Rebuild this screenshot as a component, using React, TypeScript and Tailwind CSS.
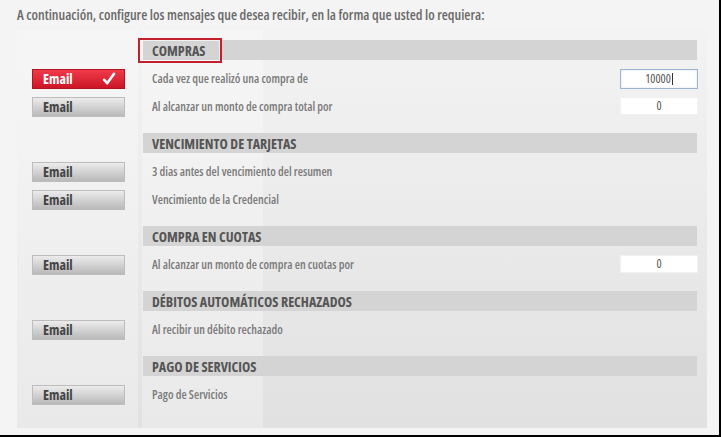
type Row = {
  label: string;
  active?: boolean;
  input?: { value: string; focused?: boolean };
};

type Section = {
  title: string;
  highlight?: boolean;
  rows: Row[];
};

const sections: Section[] = [
  {
    title: "COMPRAS",
    highlight: true,
    rows: [
      { label: "Cada vez que realizó una compra de", active: true, input: { value: "10000", focused: true } },
      { label: "Al alcanzar un monto de compra total por", input: { value: "0" } },
    ],
  },
  {
    title: "VENCIMIENTO DE TARJETAS",
    rows: [
      { label: "3 dias antes del vencimiento del resumen" },
      { label: "Vencimiento de la Credencial" },
    ],
  },
  {
    title: "COMPRA EN CUOTAS",
    rows: [{ label: "Al alcanzar un monto de compra en cuotas por", input: { value: "0" } }],
  },
  {
    title: "DÉBITOS AUTOMÁTICOS RECHAZADOS",
    rows: [{ label: "Al recibir un débito rechazado" }],
  },
  {
    title: "PAGO DE SERVICIOS",
    rows: [{ label: "Pago de Servicios" }],
  },
];

function Check() {
  return (
    <svg viewBox="0 0 14 14" className="h-[14px] w-[14px]">
      <path
        d="M2.2 7.8 L5.2 11.2 L12 1.8"
        fill="none"
        stroke="#fff"
        strokeWidth="2.6"
        strokeLinecap="round"
        strokeLinejoin="round"
      />
    </svg>
  );
}

function EmailButton({ active }: { active?: boolean }) {
  if (active) {
    return (
      <button
        type="button"
        className="flex h-[20px] w-[93px] items-center justify-between border border-[#b3121f] bg-gradient-to-b from-[#f0394a] to-[#cc1426] pl-[10px] pr-[8px] text-[14px] font-bold leading-none text-white"
      >
        Email
        <Check />
      </button>
    );
  }
  return (
    <button
      type="button"
      className="flex h-[20px] w-[93px] items-center border border-[#bdbdbd] bg-gradient-to-b from-[#ececec] to-[#b9b9b9] pl-[10px] text-[14px] font-bold leading-none text-[#444]"
    >
      Email
    </button>
  );
}

function ValueInput({ value, focused }: { value: string; focused?: boolean }) {
  return (
    <div
      className={
        focused
          ? "flex h-[20px] w-[78px] items-center justify-center border border-[#9db3d4] bg-white text-[12px] text-[#555] shadow-[inset_0_0_2px_rgba(120,150,200,0.35)]"
          : "flex h-[18px] w-[78px] items-center justify-center border border-[#f1f1f1] bg-white text-[12px] text-[#555]"
      }
    >
      {value}
      {focused ? <span className="ml-px h-[12px] w-px bg-[#333]" /> : null}
    </div>
  );
}

export default function App() {
  return (
    <div
      className="flex h-[437px] w-[721px] flex-col border-r-[2px] border-b-[2px] border-black bg-[#f4f4f4] font-stretch-condensed"
      style={{ fontFamily: "'Open Sans', sans-serif" }}
    >
      <p className="h-[30px] pl-[17px] pt-[4px] text-[14px] font-semibold text-[#6a6a6a]">
        A continuación, configure los mensajes que desea recibir, en la forma que usted lo requiera:
      </p>

      <div className="ml-[17px] mr-[12px] flex h-[398px] flex-col bg-[linear-gradient(to_right,rgba(255,255,255,0.28)_0_121px,transparent_121px_125px,rgba(255,255,255,0.28)_125px_246px,transparent_246px),linear-gradient(to_bottom,#f3f3f3,#e1e1e1)] pt-[10px]">
        {sections.map((s) => (
          <section key={s.title} className="flex flex-col">
            <div className="relative ml-[126px] mr-[10px] flex h-[20px] items-center bg-[#d4d4d4] pl-[9px] text-[14px] font-bold text-[#555]">
              {s.title}
              {s.highlight ? (
                <div className="absolute -left-[5px] -top-[2px] h-[25px] w-[84px] border-[2px] border-[#c4202c] shadow-[inset_0_0_0_1px_rgba(255,255,255,0.7)]" />
              ) : null}
            </div>
            <div className="flex flex-col gap-[8px] pt-[9px] pb-[16px]">
              {s.rows.map((r) => (
                <div key={r.label} className="flex h-[20px] items-center">
                  <div className="w-[126px] pl-[15px]">
                    <EmailButton active={r.active} />
                  </div>
                  <span className="ml-[9px] flex-1 text-[12px] font-semibold text-[#7a7a7a]">
                    {r.label}
                  </span>
                  <div className="mr-[9px] flex h-[20px] w-[78px] items-start justify-center">
                    {r.input ? <ValueInput value={r.input.value} focused={r.input.focused} /> : null}
                  </div>
                </div>
              ))}
            </div>
          </section>
        ))}
      </div>
    </div>
  );
}
